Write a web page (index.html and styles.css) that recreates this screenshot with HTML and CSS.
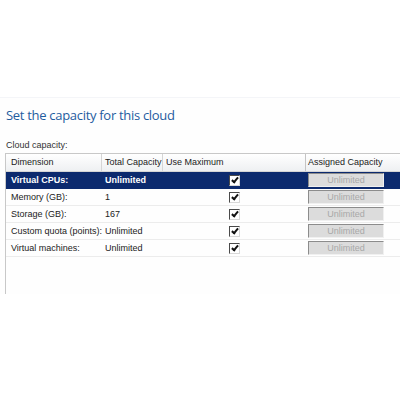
FILE: index.html
```html
<!DOCTYPE html>
<html lang="en">
<head>
    <meta charset="UTF-8">
    <meta name="viewport" content="width=device-width, initial-scale=1.0">
    <title>Create Cloud Wizard</title>
    <link rel="stylesheet" href="styles.css">
</head>
<body>
    <div class="top-space"></div>
    <div class="page">
        <h1 class="title">Set the capacity for this cloud</h1>
        <div class="label">Cloud capacity:</div>
        <div class="grid">
            <div class="row header">
                <div class="cell">Dimension</div>
                <div class="cell">Total Capacity</div>
                <div class="cell">Use Maximum</div>
                <div class="cell">Assigned Capacity</div>
            </div>
            <div class="row selected">
                <div class="cell">Virtual CPUs:</div>
                <div class="cell">Unlimited</div>
                <div class="cell center"><span class="check"></span></div>
                <div class="cell"><span class="box">Unlimited</span></div>
            </div>
            <div class="row">
                <div class="cell">Memory (GB):</div>
                <div class="cell">1</div>
                <div class="cell center"><span class="check"></span></div>
                <div class="cell"><span class="box">Unlimited</span></div>
            </div>
            <div class="row">
                <div class="cell">Storage (GB):</div>
                <div class="cell">167</div>
                <div class="cell center"><span class="check"></span></div>
                <div class="cell"><span class="box">Unlimited</span></div>
            </div>
            <div class="row">
                <div class="cell">Custom quota (points):</div>
                <div class="cell">Unlimited</div>
                <div class="cell center"><span class="check"></span></div>
                <div class="cell"><span class="box">Unlimited</span></div>
            </div>
            <div class="row">
                <div class="cell">Virtual machines:</div>
                <div class="cell">Unlimited</div>
                <div class="cell center"><span class="check"></span></div>
                <div class="cell"><span class="box">Unlimited</span></div>
            </div>
        </div>
    </div>
</body>
</html>
```

FILE: styles.css
```css
body {
    margin: 0;
    background: #fff;
    font-family: "Liberation Sans", Arial, sans-serif;
    font-size: 9px;
    color: #222;
    overflow: hidden;
}

.top-space {
    height: 97px;
    border-bottom: 1px solid #f4f5f8;
}

.page {
    background: #fefefe;
    padding-left: 5px;
    overflow: hidden;
}

.title {
    margin: 0;
    padding: 7px 0 0 1px;
    font-family: "Open Sans", sans-serif;
    font-weight: normal;
    font-size: 13px;
    letter-spacing: -0.3px;
    line-height: 20px;
    color: #1f5c9e;
}

.label {
    margin-top: 13px;
    padding-left: 1px;
    height: 15px;
    line-height: 14px;
    color: #333;
}

.grid {
    width: 420px;
    height: 140px;
    border-left: 1px solid #c8c8c8;
    border-top: 1px solid #c8c8c8;
}

.row {
    display: grid;
    grid-template-columns: 96px 61px 143px 1fr;
    height: 17px;
    border-bottom: 1px solid #ececec;
    box-sizing: border-box;
}

.cell {
    padding-left: 3px;
    line-height: 16px;
    white-space: nowrap;
    overflow: hidden;
}

.cell:first-child {
    padding-left: 5px;
}

.header {
    height: 18px;
    background: linear-gradient(#ffffff, #eef0f2);
    border-bottom: 1px solid #d5d5d5;
}

.header .cell {
    border-right: 1px solid #d5d5d5;
    line-height: 17px;
}

.header .cell:nth-child(3) {
    border-right-color: #c4c4c4;
}

.selected {
    background: #0c2a6e;
    color: #fff;
    font-weight: bold;
    border-bottom-color: #0c2a6e;
}

.center {
    display: flex;
    justify-content: center;
    align-items: center;
    padding-left: 0;
}

.check {
    position: relative;
    width: 9px;
    height: 9px;
    background: #fff;
    border: 1px solid #4a4a4a;
    border-right-color: #d8d8d8;
    border-bottom-color: #d8d8d8;
}

.check::after {
    content: "";
    position: absolute;
    left: 3px;
    top: 0px;
    width: 2px;
    height: 5px;
    border-right: 2px solid #111;
    border-bottom: 2px solid #111;
    transform: rotate(40deg);
}

.row .cell:last-child {
    padding-left: 2px;
}

.box {
    display: block;
    width: 76px;
    height: 14px;
    margin-top: 1px;
    box-sizing: border-box;
    background: #dcdcdc;
    border: 1px solid #f0f0f0;
    border-top-color: #8c8c8c;
    border-left-color: #8c8c8c;
    color: #a8a8a8;
    text-align: center;
    line-height: 12px;
    font-weight: normal;
}
```
